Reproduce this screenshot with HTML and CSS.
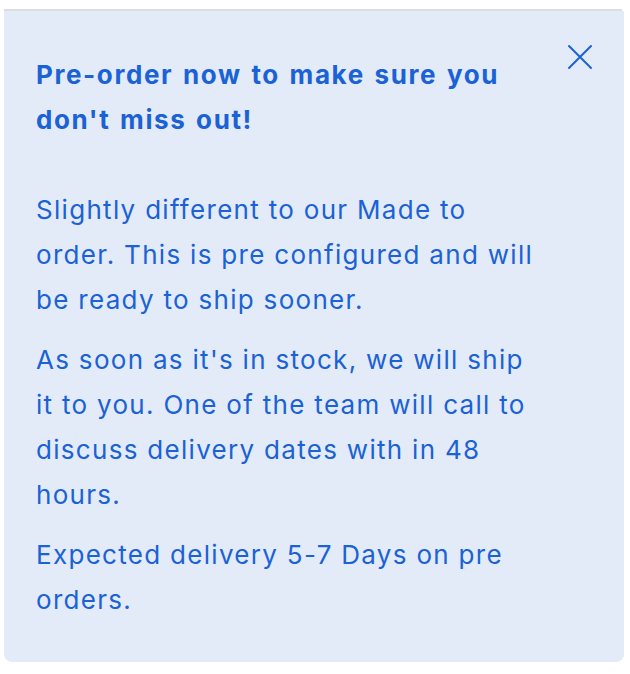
FILE: index.html
```html
<!DOCTYPE html>
<html lang="en">
<head>
    <meta charset="UTF-8">
    <meta name="viewport" content="width=device-width, initial-scale=1.0">
    <title>Pre-order</title>
    <link rel="stylesheet" href="styles.css">
</head>
<body>

<div class="divider"></div>

<section class="notice">
    <button class="close" aria-label="Close">
        <svg width="26" height="26" viewBox="0 0 26 26" fill="none" stroke="currentColor" stroke-width="2" stroke-linecap="round">
            <path d="M2 2 L24 24 M24 2 L2 24"/>
        </svg>
    </button>

    <h2>Pre-order now to make sure you don't miss out!</h2>

    <p>Slightly different to our Made to order. This is pre configured and will be ready to ship sooner.</p>
    <p>As soon as it's in stock, we will ship it to you. One of the team will call to discuss delivery dates with in 48 hours.</p>
    <p>Expected delivery 5-7 Days on pre orders.</p>
</section>

</body>
</html>
```

FILE: styles.css
```css
body {
    margin: 0;
    padding: 9px 6px 0 4px;
    font-family: Inter, "Noto Sans", sans-serif;
    background: #fff;
    color: #1a62d5;
}
.divider {
    height: 2px;
    background: #dcdde0;
    margin-right: 2px;
}
.notice {
    position: relative;
    background: #e3ebf8;
    border-radius: 0 0 8px 8px;
    padding: 41px 32px 40px 32px;
}
.notice h2 {
    margin: 0 0 45px 0;
    max-width: 503px;
    font-size: 26px;
    line-height: 45px;
    font-weight: 700;
    letter-spacing: 1.6px;
    word-spacing: 2px;
}
.notice p {
    margin: 0 0 15px 0;
    max-width: 503px;
    font-size: 26px;
    line-height: 45px;
    letter-spacing: 1.3px;
}
.notice p:last-child {
    margin-bottom: 0;
}
.close {
    position: absolute;
    top: 33px;
    right: 31px;
    padding: 0;
    border: none;
    background: none;
    color: #1a62d5;
    cursor: pointer;
}
```
